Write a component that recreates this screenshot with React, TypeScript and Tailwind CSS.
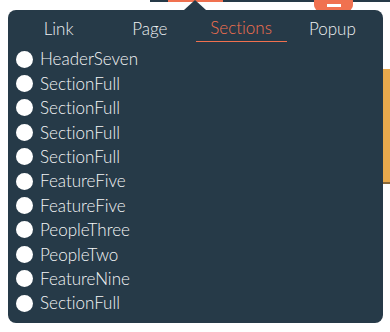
import React from "react";

const tabs = ["Link", "Page", "Sections", "Popup"];
const items = [
  "HeaderSeven",
  "SectionFull",
  "SectionFull",
  "SectionFull",
  "SectionFull",
  "FeatureFive",
  "FeatureFive",
  "PeopleThree",
  "PeopleTwo",
  "FeatureNine",
  "SectionFull",
];

export default function App() {
  return (
    <div
      className="relative h-[332px] w-[390px] overflow-hidden bg-white font-light [font-variant-ligatures:none]"
      style={{ fontFamily: "Lato, 'Open Sans', sans-serif" }}
    >
      {/* page behind the popover */}
      <div className="absolute left-[150px] right-0 top-0 h-[2px] bg-[#263a48]" />
      <div className="absolute left-[168px] top-0 h-[2px] w-[55px] bg-[#f07150]" />
      <div className="absolute left-[314px] top-0 flex h-[11px] w-[39px] items-center justify-center rounded-b-[6px] bg-[#f07150]">
        <div className="h-[3px] w-[14px] bg-white" />
      </div>
      <div className="absolute left-[383px] top-[69px] h-[115px] w-[7px] border-b-2 border-[#8a6a3a] bg-[#e8a94c]" />

      {/* popover */}
      <div className="absolute left-[8px] top-[10px] w-[375px] rounded-[8px] bg-[#263a48] pb-[8px]">
        <div className="absolute left-[176px] top-[-10px] h-0 w-0 border-x-[11px] border-b-[10px] border-x-transparent border-b-[#263a48]" />
        <div className="flex px-[5px] pt-[5px]">
          {tabs.map((t) => (
            <div
              key={t}
              className={`flex h-[27px] flex-1 items-center justify-center text-[17px] ${
                t === "Sections" ? "border-b border-[#f0704f] text-[#f3704f]" : "text-[#eef0f2]"
              }`}
            >
              {t}
            </div>
          ))}
        </div>
        <div className="mt-[5px] flex flex-col pl-[8px]">
          {items.map((it, i) => (
            <div key={i} className="flex h-[24.4px] items-center gap-[7px] text-[17px] text-[#f4f5f6]">
              <span className="h-[17px] w-[17px] rounded-full bg-white" />
              <span>{it}</span>
            </div>
          ))}
        </div>
      </div>
    </div>
  );
}
